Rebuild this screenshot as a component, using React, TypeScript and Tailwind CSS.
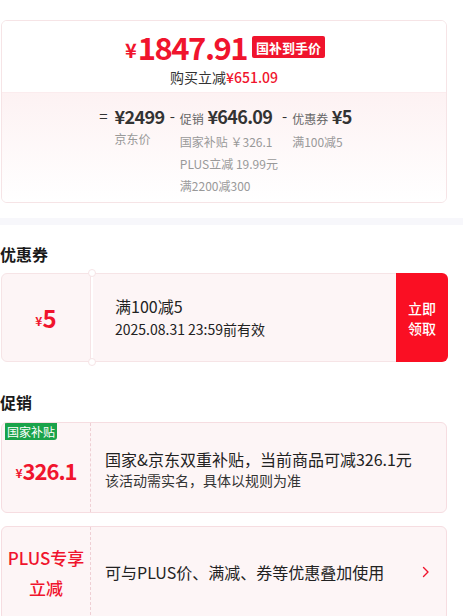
const RED = "text-[#f0142d]";

function Notches() {
  return (
    <>
      <span className="absolute left-[87px] -top-[4px] w-[8px] h-[8px] rounded-full bg-white border border-[#f6e4e6]" />
      <span className="absolute left-[87px] -bottom-[4px] w-[8px] h-[8px] rounded-full bg-white border border-[#f6e4e6]" />
    </>
  );
}

export default function App() {
  return (
    <div className="w-[463px] h-[616px] overflow-hidden bg-white font-['Noto_Sans_CJK_SC','Noto_Sans',sans-serif] text-[#1a1a1a]">
      <div className="pt-5">
        <div className="ml-px w-[446px] h-[183px] rounded-md border border-[#f6e4e6] overflow-hidden flex flex-col">
          <div className="h-[71px] flex flex-col items-center bg-white">
            <div className="flex items-center mt-[11px] h-[30px] pl-[2px]">
              <span className={`${RED} font-bold text-[20px] leading-[24px] mr-[1px] mt-[5px]`}>¥</span>
              <span className={`${RED} font-bold text-[31px] leading-[30px] tracking-[-1.5px]`}>1847.91</span>
              <span className="ml-[5px] bg-[#f0142d] text-white text-[13px] font-bold leading-none px-[4px] h-[22px] flex items-center rounded-[2px]">国补到手价</span>
            </div>
            <div className="mt-[5px] text-[14px] leading-[20px] text-[#333]">
              购买立减<span className={`${RED} font-medium`}>¥651.09</span>
            </div>
          </div>
          <div className="flex-1 bg-gradient-to-b from-[#fdf2f3] to-white border-t border-[#fbecee] flex justify-center pt-[11px] pl-[3px]">
            <div className="flex items-start">
              <span className="text-[15px] leading-[24px] text-[#333] mr-[7px]">=</span>
              <div className="flex flex-col">
                <span className="text-[18px] leading-[24px] font-bold tracking-[-0.6px] text-[#333]">¥2499</span>
                <span className="text-[12px] leading-[22px] text-[#999]">京东价</span>
              </div>
              <span className="text-[15px] leading-[24px] text-[#333] ml-[5px] mr-[5px]">-</span>
              <div className="flex flex-col">
                <span className="leading-[24px] text-[#333]">
                  <span className="text-[12px] text-[#666]">促销</span>{" "}
                  <span className="text-[18px] font-bold tracking-[-0.7px]">¥646.09</span>
                </span>
                <span className="text-[12px] leading-[22px] text-[#999]">国家补贴 ￥326.1</span>
                <span className="text-[12px] leading-[22px] text-[#999]">PLUS立减 19.99元</span>
                <span className="text-[12px] leading-[22px] text-[#999]">满2200减300</span>
              </div>
              <span className="text-[15px] leading-[24px] text-[#333] ml-[4px] mr-[5px]">-</span>
              <div className="flex flex-col">
                <span className="leading-[24px] text-[#333]">
                  <span className="text-[12px] text-[#666]">优惠券</span>{" "}
                  <span className="text-[18px] font-bold tracking-[-0.6px]">¥5</span>
                </span>
                <span className="text-[12px] leading-[22px] text-[#999]">满100减5</span>
              </div>
            </div>
          </div>
        </div>
      </div>

      <div className="h-[15px]" />
      <div className="h-[7px] bg-[#f7f7fb]" />

      <div className="h-[48px] flex items-end pb-[11px]">
        <span className="text-[16px] font-bold leading-none">优惠券</span>
      </div>

      <div className="relative ml-px w-[447px] h-[89px] flex">
        <div className="w-[90px] h-full rounded-l-md border border-[#f6e4e6] bg-[#fdf5f6] flex items-center justify-center">
          <span className={`${RED} text-[12px] font-bold mt-[6px]`}>¥</span>
          <span className={`${RED} text-[24px] font-bold leading-none`}>5</span>
        </div>
        <div className="ml-[2px] flex-1 h-full border-y border-[#f6e4e6] bg-[#fdf5f6] flex flex-col justify-center pl-[22px] pb-[2px]">
          <span className="text-[16px] leading-[24px] text-[#222]">满100减5</span>
          <span className="text-[14px] leading-[22px] text-[#222]">2025.08.31 23:59前有效</span>
        </div>
        <div className="w-[52px] h-full bg-[#fa0f23] rounded-r-md flex flex-col items-center justify-center text-white text-[14px] leading-[20px] font-medium">
          <span>立即</span>
          <span>领取</span>
        </div>
        <Notches />
      </div>

      <div className="h-[60px] flex items-end pb-[12px]">
        <span className="text-[16px] font-bold leading-none">促销</span>
      </div>

      <div className="relative ml-px w-[446px] h-[91px] rounded-md border border-[#f6dde1] bg-[#fdf5f6] flex overflow-hidden">
        <span className="absolute left-[3px] top-0 bg-[#1aa34a] text-white text-[12px] leading-[17px] px-[2px] rounded-br-[3px]">国家补贴</span>
        <div className="w-[89px] h-full border-r border-dashed border-[#efcfd4] flex items-center justify-center pt-[4px]">
          <span className={`${RED} text-[12px] font-bold mt-[6px]`}>¥</span>
          <span className={`${RED} text-[22px] font-bold leading-none tracking-[-1px]`}>326.1</span>
        </div>
        <div className="flex-1 flex flex-col justify-center pl-[14px] pt-[2px]">
          <span className="text-[16px] leading-[22px] text-[#222]">国家&amp;京东双重补贴，当前商品可减326.1元</span>
          <span className="text-[14px] leading-[20px] text-[#333]">该活动需实名，具体以规则为准</span>
        </div>
      </div>

      <div className="h-[13px]" />

      <div className="relative ml-px w-[446px] h-[95px] rounded-md border border-[#f6dde1] bg-[#fdf5f6] flex overflow-hidden">
        <div className="w-[89px] h-full border-r border-dashed border-[#efcfd4] flex flex-col items-center justify-center pb-[2px]">
          <span className={`${RED} text-[17px] font-medium leading-[30px]`}>PLUS专享</span>
          <span className={`${RED} text-[17px] font-medium leading-[30px]`}>立减</span>
        </div>
        <div className="flex-1 flex items-center pl-[14px] pb-[4px]">
          <span className="text-[16px] text-[#222]">可与PLUS价、满减、券等优惠叠加使用</span>
        </div>
        <div className="w-[40px] flex items-center justify-center pb-[4px]">
          <svg width="8" height="12" viewBox="0 0 8 12" fill="none">
            <path d="M1.5 1.5L6 6l-4.5 4.5" stroke="#f0142d" strokeWidth="1.4" strokeLinecap="round" strokeLinejoin="round" />
          </svg>
        </div>
      </div>
    </div>
  );
}
